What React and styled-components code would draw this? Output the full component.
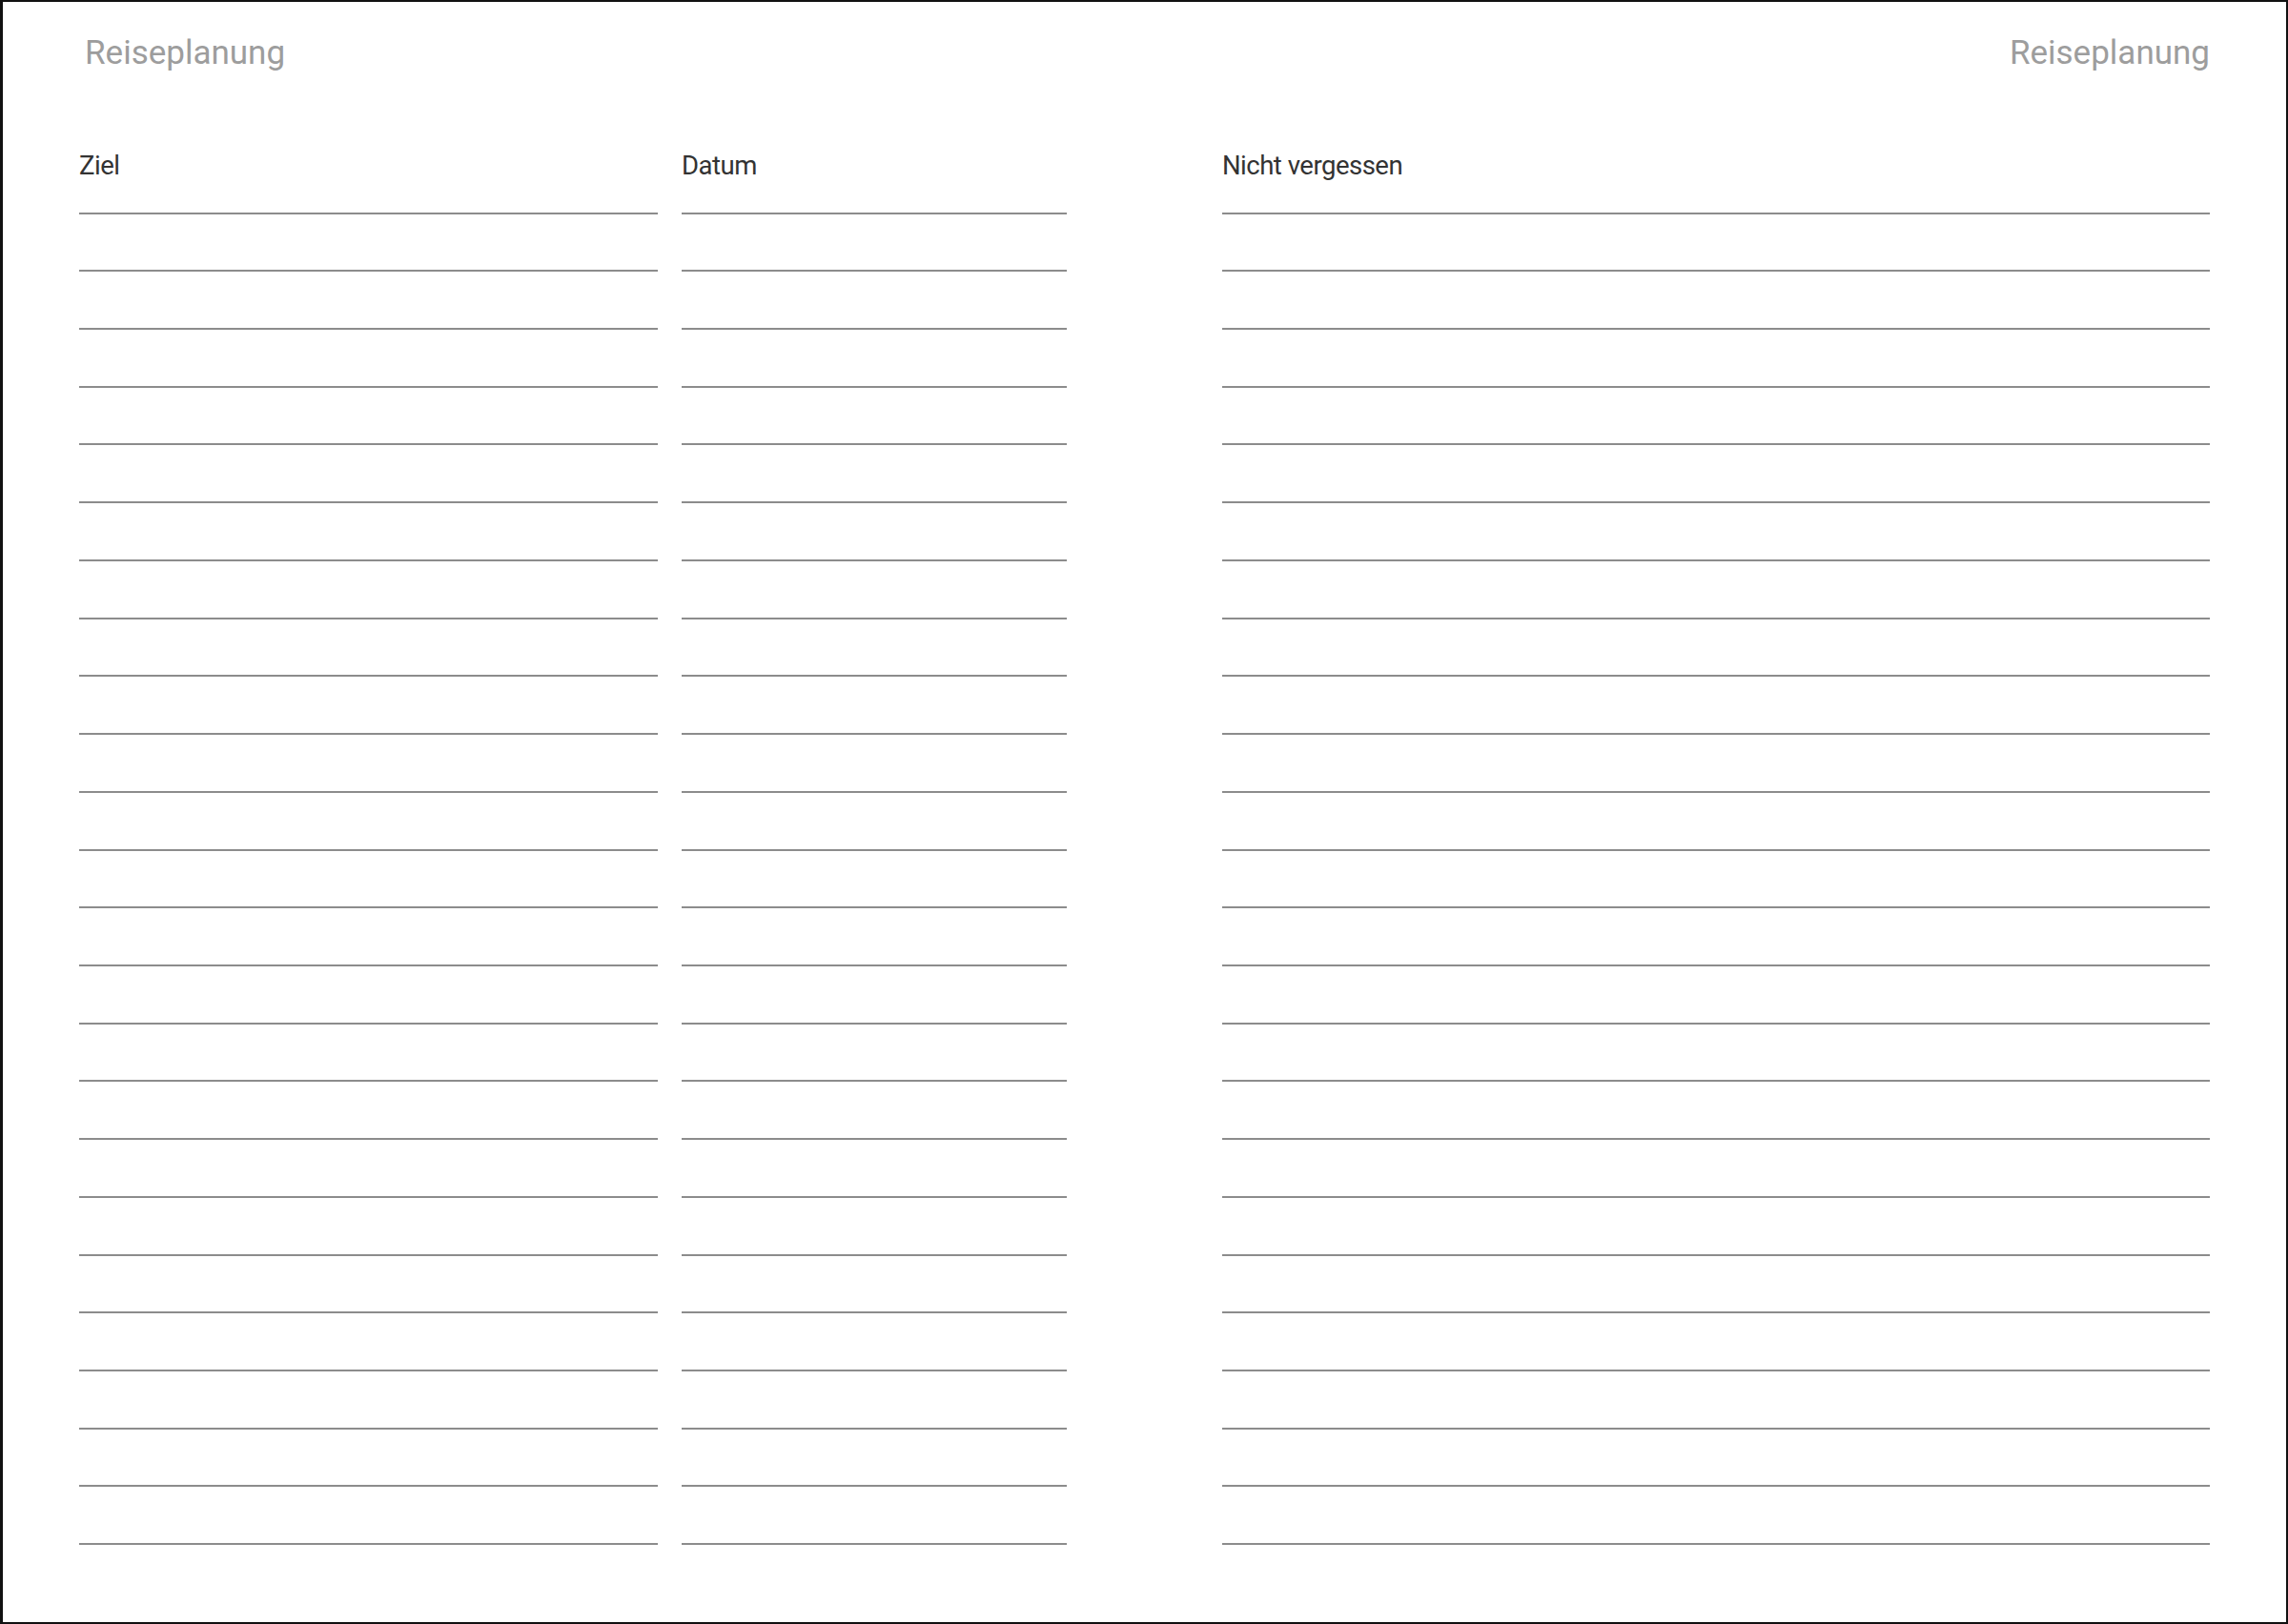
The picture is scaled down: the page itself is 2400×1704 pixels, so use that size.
import React from "react";
import styled, { createGlobalStyle } from "styled-components";

const GlobalStyle = createGlobalStyle`
  html, body {
    margin: 0;
    padding: 0;
    background: #ffffff;
  }
  body {
    font-family: Roboto, "Liberation Sans", Arial, sans-serif;
  }
`;

const Page = styled.div`
  box-sizing: border-box;
  width: 2400px;
  height: 1704px;
  background: #ffffff;
  border-style: solid;
  border-color: #111111;
  border-width: 2px 2px 2px 3px;
  padding: 36px 80px 0 80px;
  display: flex;
  flex-direction: column;
`;

const Header = styled.header`
  display: flex;
  justify-content: space-between;
  align-items: flex-start;
  padding-left: 6px;
`;

const RunningTitle = styled.div`
  font-family: Roboto, "Liberation Sans", Arial, sans-serif;
  font-size: 35px;
  line-height: 35px;
  letter-spacing: 0;
  color: #9d9d9d;
`;

const Sheet = styled.section`
  display: grid;
  grid-template-columns: 607px 404px 1fr;
  column-gap: 25px;
  margin-top: 87px;
`;

const Column = styled.div`
  display: flex;
  flex-direction: column;
  margin-left: ${(p) => p.$offset || 0}px;
`;

const Label = styled.div`
  font-family: Roboto, "Liberation Sans", Arial, sans-serif;
  font-size: 27.5px;
  line-height: 28px;
  letter-spacing: -0.5px;
  color: #333333;
  margin-bottom: 34.6px;
`;

const Lines = styled.div`
  display: flex;
  flex-direction: column;
  gap: 58.73px;
`;

const Rule = styled.div`
  height: 2px;
  background: #8c8c8c;
`;

const ROWS = Array.from({ length: 24 }, (_, i) => i);

function WriteColumn({ label, offset }) {
  return (
    <Column $offset={offset}>
      <Label>{label}</Label>
      <Lines>
        {ROWS.map((i) => (
          <Rule key={i} />
        ))}
      </Lines>
    </Column>
  );
}

export default function App() {
  return (
    <>
      <GlobalStyle />
      <Page>
        <Header>
          <RunningTitle>Reiseplanung</RunningTitle>
          <RunningTitle>Reiseplanung</RunningTitle>
        </Header>
        <Sheet>
          <WriteColumn label="Ziel" />
          <WriteColumn label="Datum" />
          <WriteColumn label="Nicht vergessen" offset={138} />
        </Sheet>
      </Page>
    </>
  );
}
